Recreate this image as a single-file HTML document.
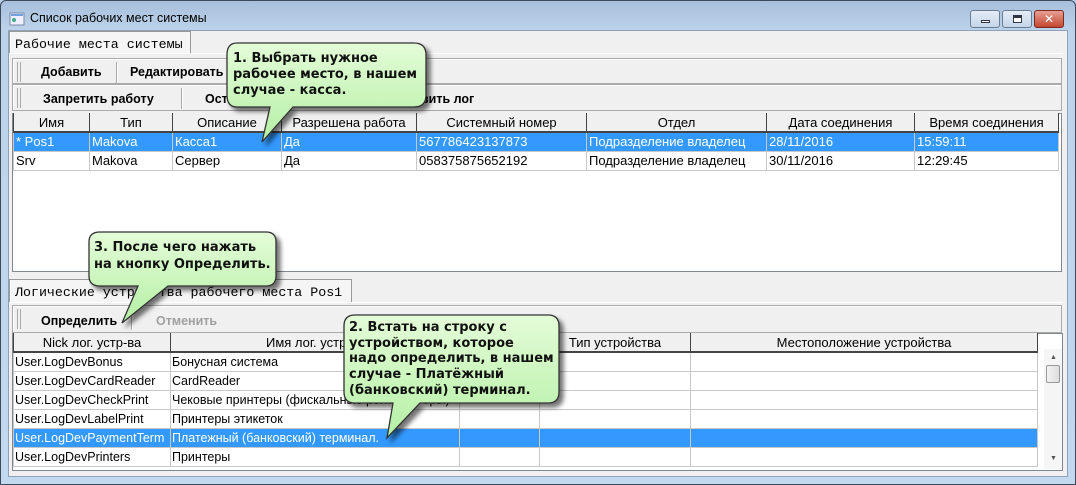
<!DOCTYPE html>
<html><head><meta charset="utf-8">
<style>
*{margin:0;padding:0;box-sizing:border-box}
body{width:1076px;height:485px;overflow:hidden;font-family:"Liberation Sans","DejaVu Sans",sans-serif;font-size:12px;color:#000;position:relative;background:#b9d1ea}
.frame{position:absolute;left:0;top:0;width:1076px;height:485px;background:linear-gradient(#a7bfdb,#bcd3ea 30px,#c2d8ee);border:1px solid #3c4a5c;border-radius:6px 6px 0 0}
.title{position:absolute;left:30px;top:11px;font-size:12.5px;font-family:"Liberation Sans",sans-serif}
.client{position:absolute;left:8px;top:30px;width:1060px;height:447px;background:#f0f0f0;border:1px solid #8da0b8}
.abs{position:absolute}
.tab{position:absolute;background:#f5f5f5;border:1px solid #999;border-bottom:none;font-family:"Liberation Mono",monospace;font-size:13.3px;padding:5px 4px 0 5px;box-shadow:1px 0 0 #fff inset;white-space:nowrap}
.tb{position:absolute;border:1px solid #aaa;background:#f0f0f0;box-shadow:inset 1px 1px 0 #fff}
.grip{position:absolute;top:3px;width:4px;height:20px;border-left:1px solid #aaa;border-right:1px solid #aaa}
.btn{position:absolute;font-weight:bold;font-size:12.5px}
.sep{position:absolute;top:3px;width:2px;height:21px;border-left:1px solid #aaa;border-right:1px solid #fff}
.box{position:absolute;background:#fff;border:1px solid #828790}
table{border-collapse:collapse;position:absolute;table-layout:fixed}
td,th{height:19px;border:1px solid #c8c8c8;padding:0 2px;font-weight:normal;white-space:nowrap;overflow:hidden;text-align:left;font-size:13px}
.t2 td{font-size:12.5px;padding:0 1px}
th{background:#f0f0f0;border:1px solid #444;border-top:none;border-bottom:2px solid #444;text-align:center;height:19px}
tr.sel td{background:#3399ff;color:#fff}
.wbtn{position:absolute;top:10px;height:18px;border:1px solid #6a7c94;border-radius:3px;background:linear-gradient(#e4edf7,#c5d5e8)}
.sb{position:absolute;left:1044px;top:349px;width:18px;height:120px;background:#f5f5f5}
</style></head><body>
<div class="frame"></div>
<svg class="abs" style="left:9px;top:12px" width="16" height="14"><rect x="1" y="1" width="14" height="12" fill="#eef" stroke="#7a8ba8"/><rect x="2" y="2" width="12" height="2" fill="#6fa0e0"/><circle cx="5" cy="8" r="2" fill="#4a8"/></svg>
<div class="title">Список рабочих мест системы</div>
<div class="wbtn" style="left:970px;width:30px"><div class="abs" style="left:10px;top:9px;width:9px;height:3px;background:#fff;border:1px solid #334"></div></div>
<div class="wbtn" style="left:1002px;width:30px"><div class="abs" style="left:10px;top:4px;width:9px;height:8px;border:1px solid #334;background:#fff;box-shadow:inset 0 2px 0 #334"></div></div>
<div class="wbtn" style="left:1034px;width:30px;background:linear-gradient(#e8a093,#c4462f);border-color:#7a2a20;color:#fff;font-weight:bold;text-align:center;font-size:12px;line-height:16px">✕</div>
<div class="client"></div>

<div class="tab" style="left:9px;top:31px;width:182px;height:23px">Рабочие места системы</div>
<div class="abs" style="left:9px;top:53px;width:1054px;height:1px;background:#fff"></div>

<div class="tb" style="left:12px;top:58px;width:1050px;height:26px"><div class="grip" style="left:4px"></div>
<div class="btn" style="left:28px;top:6px">Добавить</div><div class="sep" style="left:103px"></div>
<div class="btn" style="left:117px;top:6px">Редактировать</div></div>
<div class="tb" style="left:12px;top:84px;width:1050px;height:27px"><div class="grip" style="left:4px"></div>
<div class="btn" style="left:30px;top:7px">Запретить работу</div><div class="sep" style="left:168px"></div>
<div class="btn" style="left:192px;top:7px">Ост</div><div class="btn" style="left:408px;top:7px">вить лог</div></div>

<div class="box" style="left:12px;top:113px;width:1050px;height:159px"></div>
<table style="left:13px;top:113px;width:1045px">
<colgroup><col style="width:76px"><col style="width:83px"><col style="width:109px"><col style="width:135px"><col style="width:170px"><col style="width:180px"><col style="width:148px"><col style="width:144px"></colgroup>
<tr><th>Имя</th><th>Тип</th><th>Описание</th><th>Разрешена работа</th><th>Системный номер</th><th>Отдел</th><th>Дата соединения</th><th>Время соединения</th></tr>
<tr class="sel"><td>* Pos1</td><td>Makova</td><td>Касса1</td><td>Да</td><td>567786423137873</td><td>Подразделение владелец</td><td>28/11/2016</td><td>15:59:11</td></tr>
<tr><td>Srv</td><td>Makova</td><td>Сервер</td><td>Да</td><td>058375875652192</td><td>Подразделение владелец</td><td>30/11/2016</td><td>12:29:45</td></tr>
</table>

<div class="tab" style="left:9px;top:279px;width:343px;height:24px">Логические устройства рабочего места Pos1</div>
<div class="abs" style="left:9px;top:302px;width:1054px;height:1px;background:#fff"></div>
<div class="tb" style="left:12px;top:305px;width:1050px;height:28px"><div class="grip" style="left:4px"></div>
<div class="btn" style="left:28px;top:8px">Определить</div><div class="sep" style="left:118px"></div>
<div class="btn" style="left:143px;top:8px;color:#a0a0a0">Отменить</div></div>

<div class="box" style="left:12px;top:333px;width:1051px;height:138px"></div>
<table class="t2" style="left:13px;top:333px;width:1024px">
<colgroup><col style="width:157px"><col style="width:289px"><col style="width:80px"><col style="width:151px"><col style="width:347px"></colgroup>
<tr><th>Nick лог. устр-ва</th><th colspan="2" style="text-align:left;padding-left:95px">Имя лог. устройства</th><th>Тип устройства</th><th>Местоположение устройства</th></tr>
<tr><td>User.LogDevBonus</td><td>Бонусная система</td><td></td><td></td><td></td></tr>
<tr><td>User.LogDevCardReader</td><td>CardReader</td><td></td><td></td><td></td></tr>
<tr><td>User.LogDevCheckPrint</td><td>Чековые принтеры (фискальные регистраторы)</td><td></td><td></td><td></td></tr>
<tr><td>User.LogDevLabelPrint</td><td>Принтеры этикеток</td><td></td><td></td><td></td></tr>
<tr class="sel"><td>User.LogDevPaymentTerm</td><td>Платежный (банковский) терминал.</td><td></td><td></td><td></td></tr>
<tr><td>User.LogDevPrinters</td><td>Принтеры</td><td></td><td></td><td></td></tr>
</table>
<div class="sb"><div class="abs" style="left:6px;top:5px;font-size:7px;color:#555">▲</div><div class="abs" style="left:2px;top:16px;width:14px;height:18px;border:1px solid #999;border-radius:2px;background:linear-gradient(90deg,#f3f3f3,#ddd)"></div><div class="abs" style="left:6px;top:106px;font-size:7px;color:#555">▼</div></div>

<svg class="abs" style="left:0;top:0" width="1076" height="485">
<defs><linearGradient id="g" x1="0" y1="0" x2="0" y2="1"><stop offset="0" stop-color="#e4fcd8"/><stop offset="1" stop-color="#b4f0a4"/></linearGradient>
<filter id="s" x="-20%" y="-20%" width="150%" height="160%"><feDropShadow dx="4" dy="4" stdDeviation="2.5" flood-color="#000" flood-opacity="0.55"/></filter></defs>
<g fill="url(#g)" stroke="#333" stroke-width="1.3" filter="url(#s)">
<path d="M237,43 H414 Q426,43 426,55 V95 Q426,107 414,107 H293 L262,142 L270,107 H237 Q227,107 227,95 V55 Q227,43 237,43 Z"/>
<path d="M100,232 H266 Q276,232 276,242 V276 Q276,286 266,286 H168 L122,323 L138,286 H100 Q89,286 89,276 V242 Q89,232 100,232 Z"/>
<path d="M355,315 H548 Q559,315 559,326 V392 Q559,403 548,403 H420 L387,438 L393,403 H355 Q344,403 344,392 V326 Q344,315 355,315 Z"/>
</g>
<g font-family="DejaVu Sans,Verdana,sans-serif" font-weight="bold" font-size="13" fill="#111">
<text x="233" y="62">1. Выбрать нужное</text>
<text x="233" y="78">рабочее место, в нашем</text>
<text x="233" y="94">случае - касса.</text>
<text x="94" y="251">3. После чего нажать</text>
<text x="94" y="268">на кнопку Определить.</text>
<text x="349" y="331">2. Встать на строку с</text>
<text x="349" y="347">устройством, которое</text>
<text x="349" y="362">надо определить, в нашем</text>
<text x="349" y="378">случае - Платёжный</text>
<text x="349" y="394">(банковский) терминал.</text>
</g>
</svg>
</body></html>
